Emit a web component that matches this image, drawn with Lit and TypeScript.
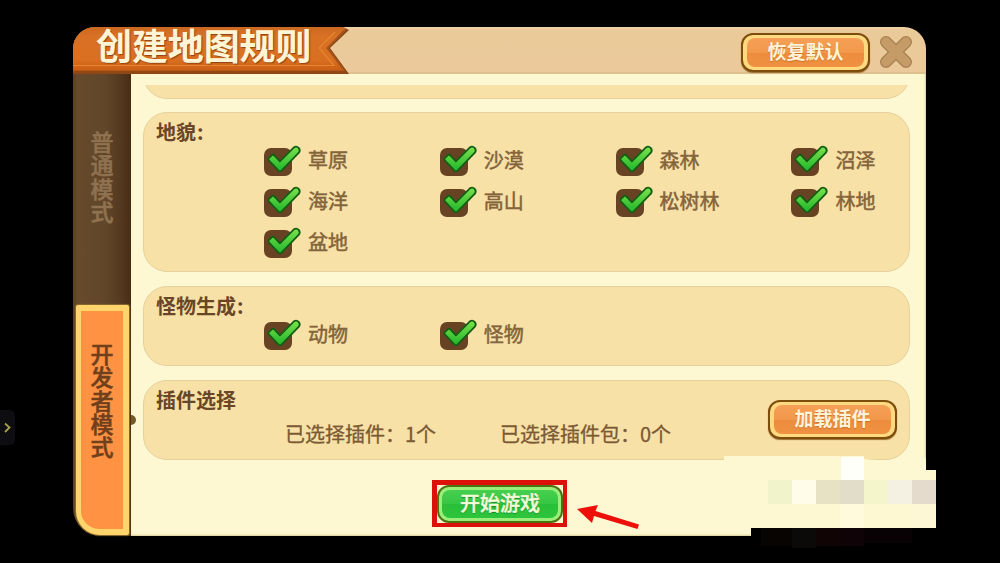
import { LitElement, html, css, svg } from 'lit';
import { customElement, property } from 'lit/decorators.js';
import { classMap } from 'lit/directives/class-map.js';

const TERRAINS = ['草原', '沙漠', '森林', '沼泽', '海洋', '高山', '松树林', '林地', '盆地'];
const SPAWNS = ['动物', '怪物'];

const MOSAIC = [
  { x: 841, y: 457, w: 23, h: 23, fill: '#fffffa' },
  { x: 768, y: 480, w: 24, h: 24, fill: '#f1f3ca' },
  { x: 792, y: 480, w: 24, h: 24, fill: '#fffce9' },
  { x: 816, y: 480, w: 24, h: 24, fill: '#e8e2c4' },
  { x: 840, y: 480, w: 24, h: 24, fill: '#e2ddc8' },
  { x: 864, y: 480, w: 24, h: 24, fill: '#f4f5cb' },
  { x: 888, y: 480, w: 24, h: 24, fill: '#f5f1e2' },
  { x: 912, y: 480, w: 24, h: 24, fill: '#e4dbcd' },
  { x: 840, y: 504, w: 24, h: 24, fill: '#fffadb' },
  { x: 912, y: 504, w: 24, h: 24, fill: '#fdf7d5' },
  { x: 761, y: 528, w: 31, h: 18, fill: '#070401' },
  { x: 792, y: 528, w: 24, h: 20, fill: '#0c0a09' },
  { x: 816, y: 528, w: 24, h: 18, fill: '#110405' },
  { x: 840, y: 528, w: 24, h: 18, fill: '#100307' },
  { x: 864, y: 528, w: 48, h: 15, fill: '#090204' },
];

@customElement('check-item')
export class CheckItem extends LitElement {
  static styles = css`
    :host {
      display: flex;
      align-items: center;
      gap: 16px;
      height: 41px;
    }

    .box {
      width: 28px;
      height: 28px;
      margin-top: 2px;
      border-radius: 7px;
      background: #674323;
    }

    svg {
      display: block;
      width: 40px;
      height: 32px;
      margin-top: -4px;
    }

    span {
      margin-top: -1px;
      font-size: 20px;
      line-height: 28px;
      white-space: nowrap;
      color: #83643b;
      -webkit-text-stroke: 0.5px #83643b;
    }
  `;

  @property({ type: String })
  label = '';

  render() {
    return html`
      <div class="box">
        <svg viewBox="0 0 40 32">
          <defs>
            <linearGradient id="green" x1="0" y1="0" x2="0" y2="1">
              <stop offset="0" stop-color="#7be34c" />
              <stop offset="1" stop-color="#1fb52b" />
            </linearGradient>
          </defs>
          <path
            d="M4.800 14L8.400 10.900Q9.400 10.500 10.300 11.400L15.900 17.300L29.900 3.300Q32.500 1.600 34.700 3.800Q36.700 6.200 34.900 8.700L17.500 26.600Q16 28 14.500 26.600L4.800 16.300Q4 15 4.800 14Z"
            fill="url(#green)"
            stroke="#145e14"
            stroke-width="1.800"
            stroke-linejoin="round"
          />
        </svg>
      </div>
      <span>${this.label}</span>
    `;
  }
}

@customElement('game-button')
export class GameButton extends LitElement {
  static styles = css`
    :host {
      display: block;
    }

    .button {
      box-sizing: border-box;
      display: flex;
      width: 129px;
      height: 39px;
      padding: 3px 4px;
      border: 2px solid #7c4d0d;
      border-radius: 12px;
      background: #ffd980;
      box-shadow: 0 1px 1px #9a6c2f;
    }

    .face {
      flex: 1;
      display: flex;
      align-items: center;
      justify-content: center;
      padding-bottom: 3px;
      border-radius: 8px;
      background: linear-gradient(#f5a057 0, #f2984b 50%, #ed8c3c 51%, #ef9142 100%);
      color: #fff3d9;
      font-size: 19px;
      font-weight: 700;
      line-height: 26px;
      text-shadow: 0 1px 1px #c6732b;
    }

    .green {
      width: 126px;
      height: 38px;
      padding: 3px;
      border-color: #4b7410;
      background: #9bee79;
      box-shadow: none;
    }

    .green .face {
      background: linear-gradient(#47cf4f 0, #35c743 50%, #29be38 51%, #2ec53d 100%);
      color: #f3fbd9;
      font-size: 20px;
      font-weight: 500;
      -webkit-text-stroke: 0.4px #f3fbd9;
      text-shadow: 0 1px 1px #14832a;
    }
  `;

  @property({ type: String })
  label = '';

  @property({ type: Boolean })
  green = false;

  render() {
    return html`
      <div class=${classMap({ button: true, green: this.green })}>
        <div class="face">${this.label}</div>
      </div>
    `;
  }
}

@customElement('app-root')
export class AppRoot extends LitElement {
  static styles = css`
    :host {
      box-sizing: border-box;
      display: block;
      position: relative;
      width: 1000px;
      height: 563px;
      padding: 27px 74px 26px 73px;
      overflow: hidden;
      background: #000;
      font-family: 'Noto Sans CJK SC', sans-serif;
    }

    .window {
      display: flex;
      flex-direction: column;
      height: 509px;
    }

    header {
      display: flex;
      align-items: flex-start;
      box-sizing: border-box;
      height: 47px;
      border-radius: 22px 22px 0 0;
      background: linear-gradient(#f0d2a5 0, #ebca9a 3px, #ebc99a 45px, #d4b17e 46px, #ead7a9 47px);
    }

    .ribbon {
      display: grid;
      width: 276px;
      height: 47px;
    }

    .ribbon > * {
      grid-area: 1 / 1;
    }

    .ribbon svg {
      border-radius: 22px 0 0 0;
    }

    h1 {
      margin: -1px 0 0 23px;
      font-size: 36px;
      font-weight: 700;
      line-height: 36px;
      letter-spacing: -0.1px;
      white-space: nowrap;
      color: #fff5d5;
      text-shadow: 1px 1px 1px #8e4413;
    }

    header game-button {
      margin: 6px 9px 0 auto;
    }

    .close {
      width: 34px;
      height: 34px;
      margin: 8px 13px 0 0;
    }

    .body {
      flex: 1;
      display: flex;
      min-height: 0;
    }

    nav {
      display: flex;
      flex-direction: column;
      width: 58px;
      border-radius: 0 0 0 28px;
      background: linear-gradient(90deg, #5a4223 0, #664a2b 5px, #62462a 32px, #52371e 50px, #462d14 58px);
    }

    .tab {
      display: flex;
      justify-content: center;
      box-sizing: border-box;
      writing-mode: vertical-rl;
      align-items: center;
      font-size: 23px;
      line-height: 30px;
      letter-spacing: 0.2px;
      font-weight: 500;
      -webkit-text-stroke: 0.5px currentColor;
    }

    .normal {
      height: 231px;
      padding-bottom: 24px;
      color: #8f7250;
    }

    .developer {
      height: 230px;
      margin: 0 2px 0 3px;
      padding-bottom: 38px;
      border: solid #ffd46c;
      border-width: 6px 6px 6px 5px;
      border-radius: 2px 2px 2px 24px;
      background: #ff9243;
      color: #70401c;
      box-shadow: inset 0 0 2px #eb9c3e, 0 0 1px 1px #8b6b2c;
    }

    .pointer {
      z-index: 1;
      align-self: flex-start;
      width: 5px;
      height: 10px;
      margin-top: 341px;
      margin-right: -5px;
      border-radius: 0 5px 5px 0;
      background: #765929;
    }

    main {
      flex: 1;
      display: flex;
      flex-direction: column;
      padding: 11px 16px 0 12px;
      background: #fdf8d1;
      box-shadow: inset -1px -1px 2px #d9cc9a;
    }

    .clip {
      display: flex;
      align-items: flex-end;
      height: 14px;
      margin-bottom: 13px;
      overflow: hidden;
    }

    .panel {
      box-sizing: border-box;
      border: 1px solid #e5d19e;
      border-radius: 24px;
      background: #f8e1a6;
    }

    .clip .panel {
      flex: 1;
      height: 80px;
      flex-shrink: 0;
    }

    .list {
      display: flex;
      flex-direction: column;
      gap: 14px;
    }

    .list .panel {
      height: 80px;
      padding: 5px 12px 0;
    }

    .list .panel.tall {
      height: 160px;
    }

    h2 {
      margin: 0;
      font-size: 20px;
      font-weight: 700;
      line-height: 28px;
      color: #6a4628;
    }

    .colon {
      margin-left: 1px;
    }

    .checks {
      display: grid;
      grid-template-columns: repeat(4, 175.800px);
      margin: -6px -100px 0 108px;
    }

    .plugins {
      display: flex;
      align-items: center;
      height: 28px;
      margin: 6px 0 0 129px;
      font-size: 20px;
      line-height: 28px;
      white-space: nowrap;
      color: #7b5935;
      -webkit-text-stroke: 0.3px #7b5935;
    }

    .plugins span {
      width: 215px;
    }

    .plugins game-button {
      margin: -29px 0 0 auto;
      -webkit-text-stroke: 0;
    }

    footer {
      display: flex;
      align-items: flex-start;
      margin: 20px 0 0 289px;
    }

    .highlight {
      border: solid #dc1109;
      border-width: 5px 4px 4px 5px;
    }

    .arrow {
      width: 64px;
      height: 30px;
      margin: 21px 0 0 9px;
    }

    .overlay {
      position: absolute;
      inset: 0;
      width: 1000px;
      height: 563px;
      pointer-events: none;
    }
  `;

  render() {
    return html`
      <div class="window">
        <header>
          <div class="ribbon">
            <svg width="276" height="47" viewBox="0 0 276 47">
              <defs>
                <linearGradient id="ribbon" x1="0" y1="0" x2="0" y2="1">
                  <stop offset="0" stop-color="#cc6820" />
                  <stop offset="0.2" stop-color="#d87125" />
                  <stop offset="0.75" stop-color="#d96f20" />
                  <stop offset="1" stop-color="#c95d16" />
                </linearGradient>
              </defs>
              <path d="M0 0H270L276 3L257 21L276 47H0Z" fill="#8a4718" />
              <path d="M0 0H270L273 2L254 21L272 44H0Z" fill="url(#ribbon)" />
              <path d="M0 38.500H261L246 21L262 5" fill="none" stroke="#e8852f" stroke-width="1.200" />
              <path d="M0 45H273" stroke="#924715" stroke-width="2.500" />
              <path d="M272 3L254.500 21L271 43" fill="none" stroke="#a65319" stroke-width="2" />
            </svg>
            <h1>创建地图规则</h1>
          </div>
          <game-button label="恢复默认"></game-button>
          <svg class="close" viewBox="0 0 34 34">
            <path d="M7 7L27 27M27 7L7 27" stroke="#a98150" stroke-width="12" stroke-linecap="round" />
            <path d="M7 7L27 27M27 7L7 27" stroke="#c59b67" stroke-width="9.500" stroke-linecap="round" />
          </svg>
        </header>
        <div class="body">
          <nav>
            <div class="tab normal">普通模式</div>
            <div class="tab developer">开发者模式</div>
          </nav>
          <div class="pointer"></div>
          <main>
            <div class="clip"><div class="panel"></div></div>
            <div class="list">
              <section class="panel tall">
                <h2>地貌<span class="colon">:</span></h2>
                <div class="checks">${TERRAINS.map((name) => html`<check-item label=${name}></check-item>`)}</div>
              </section>
              <section class="panel">
                <h2>怪物生成<span class="colon">:</span></h2>
                <div class="checks">${SPAWNS.map((name) => html`<check-item label=${name}></check-item>`)}</div>
              </section>
              <section class="panel">
                <h2>插件选择</h2>
                <div class="plugins">
                  <span>已选择插件：1个</span>
                  <span>已选择插件包：0个</span>
                  <game-button label="加载插件"></game-button>
                </div>
              </section>
            </div>
            <footer>
              <div class="highlight"><game-button green label="开始游戏"></game-button></div>
              <svg class="arrow" viewBox="0 0 64 30">
                <path d="M1 8L22 4L19.500 10L63 23.500L61.500 28L18 15L16 22Z" fill="#ed100a" />
              </svg>
            </footer>
          </main>
        </div>
      </div>
      <svg class="overlay" viewBox="0 0 1000 563">
        <path d="M751 528H936V563H751Z" fill="#000" />
        <path d="M724 456H864V459L890 461L926 458V470H936V528H724Z" fill="#fdf8d1" />
        ${MOSAIC.map((m) => svg`<rect x=${m.x} y=${m.y} width=${m.w} height=${m.h} fill=${m.fill} />`)}
        <path d="M0 410H9Q15 410 15 416V439Q15 445 9 445H0Z" fill="#0d0d12" />
        <path d="M5 423.500L9.500 427.500L5 432" fill="none" stroke="#a9a04a" stroke-width="1.800" />
      </svg>
    `;
  }
}

declare global {
  interface HTMLElementTagNameMap {
    'app-root': AppRoot;
    'check-item': CheckItem;
    'game-button': GameButton;
  }
}
